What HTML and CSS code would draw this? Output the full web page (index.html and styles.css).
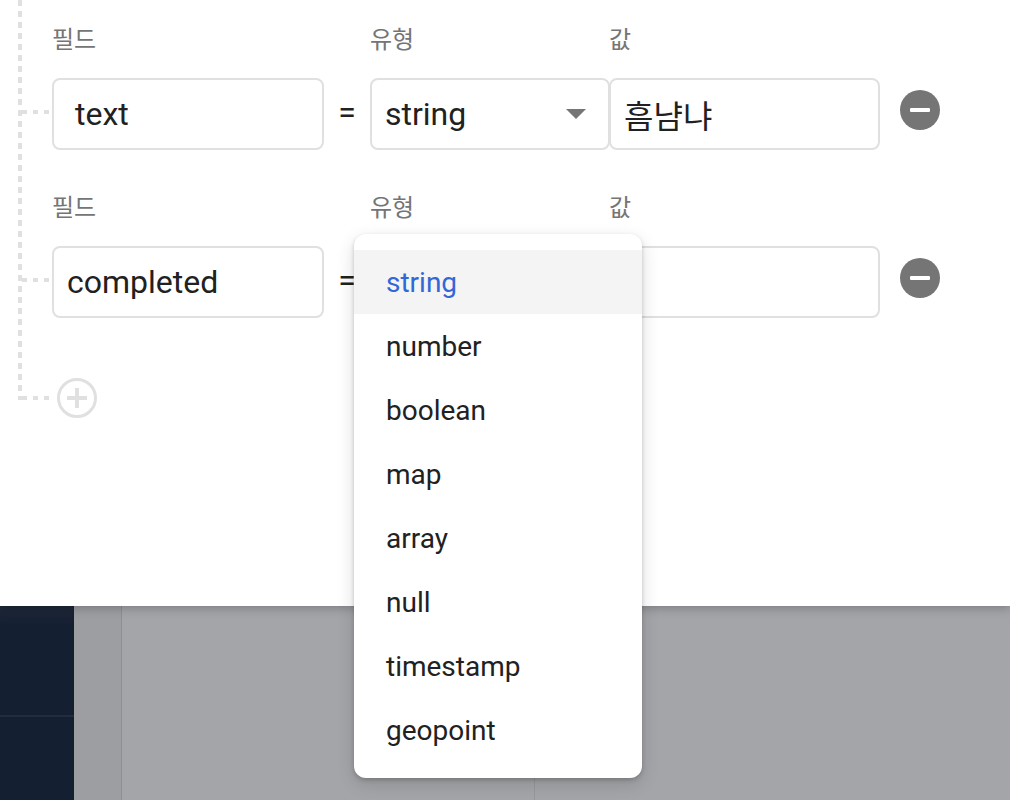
FILE: index.html
```
<!DOCTYPE html>
<html lang="ko">
  <head>
    <meta charset="UTF-8" />
    <meta name="viewport" content="width=device-width, initial-scale=1.0" />
    <title>문서 추가</title>
    <link rel="stylesheet" href="styles.css">
  </head>
  <body>
    <div class="dialog">
      <div class="tree">
        <div class="field">
          <span class="label col-name">필드</span>
          <span class="label col-type">유형</span>
          <span class="label col-value">값</span>
          <span class="connector"></span>
          <input class="box col-name" type="text" value=" text" />
          <span class="eq">=</span>
          <div class="col-type type-cell">
            <div class="box select">
              <span>string</span>
              <svg class="arrow" width="20" height="10" viewBox="0 0 20 10"><path d="M0 0h20L10 10z" fill="#757575"/></svg>
            </div>
          </div>
          <input class="box col-value" type="text" value="흠냠냐" />
          <button class="remove" title="필드 삭제">
            <svg width="40" height="40" viewBox="0 0 40 40"><circle cx="20" cy="20" r="20" fill="#757575"/><rect x="10" y="18" width="20" height="4" rx="1" fill="#fff"/></svg>
          </button>
        </div>

        <div class="field last">
          <span class="label col-name">필드</span>
          <span class="label col-type">유형</span>
          <span class="label col-value">값</span>
          <span class="connector"></span>
          <input class="box col-name" type="text" value="completed" />
          <span class="eq">=</span>
          <div class="col-type type-cell">
            <div class="box select">
              <span>string</span>
              <svg class="arrow" width="20" height="10" viewBox="0 0 20 10"><path d="M0 0h20L10 10z" fill="#757575"/></svg>
            </div>
            <ul class="menu">
              <li class="selected">string</li>
              <li>number</li>
              <li>boolean</li>
              <li>map</li>
              <li>array</li>
              <li>null</li>
              <li>timestamp</li>
              <li>geopoint</li>
            </ul>
          </div>
          <input class="box col-value" type="text" value="" />
          <button class="remove" title="필드 삭제">
            <svg width="40" height="40" viewBox="0 0 40 40"><circle cx="20" cy="20" r="20" fill="#757575"/><rect x="10" y="18" width="20" height="4" rx="1" fill="#fff"/></svg>
          </button>
        </div>

        <div class="add-row">
          <span class="connector"></span>
          <button class="add" title="필드 추가">
            <svg width="40" height="40" viewBox="0 0 40 40"><circle cx="20" cy="20" r="18.5" fill="none" stroke="#e0e0e0" stroke-width="3"/><path d="M10 20h20M20 10v20" stroke="#e0e0e0" stroke-width="4"/></svg>
          </button>
        </div>
      </div>
    </div>

    <div class="backdrop">
      <div class="nav"><div class="nav-top"></div></div>
      <div class="rail"></div>
      <div class="main"><div class="main-left"></div></div>
    </div>
  </body>
</html>
```

FILE: styles.css
```
body {
  margin: 0;
  width: 1010px;
  height: 800px;
  overflow: hidden;
  font-family: Roboto, "Noto Sans CJK KR", sans-serif;
  background-color: #a4a5a9;
}
.dialog {
  position: relative;
  z-index: 1;
  height: 606px;
  box-sizing: border-box;
  padding-left: 18px;
  background: white;
  box-shadow: 0 2px 10px rgba(0, 0, 0, 0.25);
}
.tree {
  padding-top: 28px;
  background: repeating-linear-gradient(to bottom, #e0e0e0 0 6px, transparent 6px 11px) left top / 4px calc(100% - 18px) no-repeat;
}
.field {
  display: grid;
  grid-template-columns: 34px 272px 46px 239px 271px 20px 40px;
  grid-template-rows: 25px 72px;
  row-gap: 25px;
  margin-bottom: 46px;
}
.field.last {
  margin-bottom: 60px;
}
.label {
  grid-row: 1;
  font-size: 24px;
  line-height: 24px;
  color: #757575;
}
.col-name {
  grid-column: 2;
}
.col-type {
  grid-column: 4;
}
.col-value {
  grid-column: 5;
}
.connector {
  grid-row: 2;
  grid-column: 1;
  align-self: center;
  width: 28px;
  height: 4px;
  margin: 0 0 4px 4px;
  background: repeating-linear-gradient(to right, #e0e0e0 0 5px, transparent 5px 11px);
}
.box {
  grid-row: 2;
  width: 100%;
  height: 72px;
  box-sizing: border-box;
  margin: 0;
  padding: 0 13px;
  border: 2px solid #e0e0e0;
  border-radius: 8px;
  background: white;
  font-family: inherit;
  font-size: 32px;
  color: #212121;
  outline: none;
}
.eq {
  grid-row: 2;
  grid-column: 3;
  align-self: center;
  margin-bottom: 5px;
  text-align: center;
  font-size: 32px;
  color: #212121;
}
.type-cell {
  grid-row: 2;
  position: relative;
}
.select {
  display: flex;
  align-items: center;
  justify-content: space-between;
  width: 240px;
  padding-right: 22px;
}
.remove,
.add {
  padding: 0;
  border: none;
  background: none;
  cursor: pointer;
  line-height: 0;
}
.remove {
  grid-row: 2;
  grid-column: 7;
  align-self: center;
  margin-bottom: 8px;
}
.add-row {
  display: flex;
  align-items: center;
  height: 40px;
}
.add-row .connector {
  margin: 0 7px 0 4px;
}
.menu {
  position: absolute;
  z-index: 10;
  left: -16px;
  top: -12px;
  width: 288px;
  margin: 0;
  padding: 16px 0;
  list-style: none;
  background: white;
  border-radius: 12px;
  box-shadow: 0 2px 4px rgba(0, 0, 0, 0.18), 0 6px 18px rgba(0, 0, 0, 0.14);
}
.menu li {
  height: 64px;
  box-sizing: border-box;
  padding: 2px 0 0 32px;
  line-height: 62px;
  font-size: 28px;
  color: #212121;
}
.menu li.selected {
  background-color: #f4f4f4;
  color: #3367d6;
}
.backdrop {
  display: flex;
  height: 194px;
}
.nav {
  width: 74px;
  background: linear-gradient(to bottom, #1e2839, #151f32 20px);
}
.nav-top {
  height: 109px;
  border-bottom: 2px solid #222c3e;
}
.rail {
  width: 47px;
  background-color: #9d9ea2;
  border-right: 1px solid #8d8e92;
  box-shadow: 1px 0 3px rgba(0, 0, 0, 0.12);
}
.main {
  flex: 1;
  background-color: #a4a5a9;
}
.main-left {
  width: 412px;
  height: 100%;
  border-right: 1px solid #97989c;
}
```
